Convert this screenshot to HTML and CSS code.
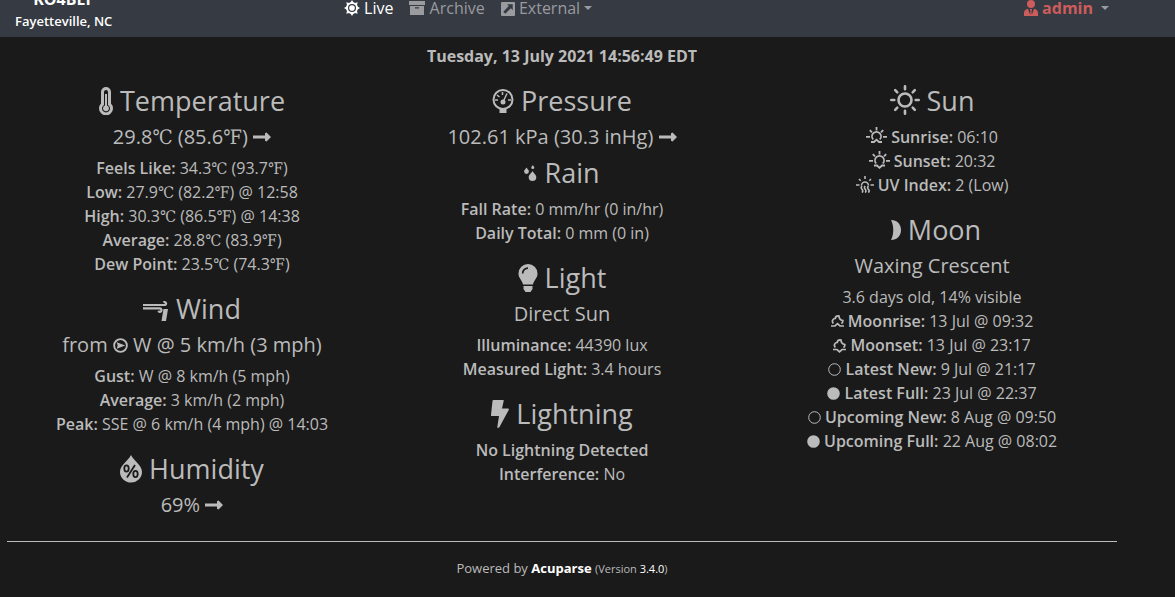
FILE: index.html
```html
<!DOCTYPE html>
<html lang="en">
<head>
    <meta charset="UTF-8">
    <meta name="viewport" content="width=device-width, initial-scale=1.0">
    <title>Fayetteville, NC | Live Weather</title>
    <link rel="stylesheet" href="styles.css">
</head>
<body>

    <!-- Icons used more than once -->
    <svg class="sprite" aria-hidden="true">
        <symbol id="arrow-right" viewBox="0 0 18 10">
            <path d="M0 3.500h12V1.200L13.500.5 18 5l-4.500 4.500L12 8.800V6.500H0z"/>
        </symbol>
        <symbol id="moon-new" viewBox="0 0 13 13">
            <circle cx="6.500" cy="6.500" r="5.800" fill="none" stroke="currentColor"/>
        </symbol>
        <symbol id="moon-full" viewBox="0 0 13 13">
            <circle cx="6.500" cy="6.500" r="6.300"/>
        </symbol>
    </svg>

    <nav class="navbar">
        <a class="brand" href="#">
            <span class="brand-name">KO4BEF</span>
            <span class="brand-location">Fayetteville, NC</span>
        </a>
        <div class="nav-links">
            <a class="nav-link active" href="#">
                <svg class="icon" width="16" height="16" viewBox="0 0 16 16"><circle cx="8" cy="8" r="5" fill="none" stroke="currentColor" stroke-width="2"/><circle cx="8" cy="8" r="2.800"/><path d="M8 0l1.800 3H6.200zM8 16l1.800-3H6.200zM0 8l3-1.800v3.600zM16 8l-3-1.800v3.600zM2.300 2.300l3.500.900-2.600 2.600zM13.700 2.300l-.900 3.500-2.600-2.600zM2.300 13.700l.9-3.500 2.600 2.600zM13.700 13.700l-3.500-.9 2.600-2.600z"/></svg>
                Live</a>
            <a class="nav-link" href="#">
                <svg class="icon" width="16" height="16" viewBox="0 0 16 16"><path d="M0 1h16v4H0z"/><path fill-rule="evenodd" d="M1 6h14v9H1zM6 7.200v1.300h4V7.200z"/></svg>
                Archive</a>
            <a class="nav-link" href="#">
                <svg class="icon" width="14" height="14" viewBox="0 0 14 14"><path fill-rule="evenodd" d="M1 0h12a1 1 0 0 1 1 1v12a1 1 0 0 1-1 1H1a1 1 0 0 1-1-1V1a1 1 0 0 1 1-1zM6 2.300L7.800 4 2.300 9.700l2 2L9.900 6.200 11.700 8V2.300z"/></svg>
                External<span class="caret"></span></a>
        </div>
        <a class="nav-link nav-user" href="#">
            <svg class="icon" width="14" height="16" viewBox="0 0 14 16"><circle cx="7" cy="4" r="4"/><path d="M4 9l2.200 6L6.500 11 5.800 9h2.400l-.7 2 .3 4L10 9c2.500.1 4 1.900 4 4v3H0v-3c0-2.100 1.500-3.900 4-4z"/></svg>
            admin<span class="caret"></span></a>
    </nav>

    <div class="page">
        <p class="timestamp">Tuesday, 13 July 2021 14:56:49 EDT</p>

        <main class="dashboard">
            <div class="column">
                <section class="block">
                    <h2><svg class="icon icon-low" width="14" height="28" viewBox="0 0 14 28"><path fill-rule="evenodd" d="M7 0a5 5 0 0 1 5 5v11.500a7 7 0 1 1-10 0V5a5 5 0 0 1 5-5zM7 3a2 2 0 0 0-2 2v13a4 4 0 1 0 4 0V5a2 2 0 0 0-2-2z"/><path d="M6 7h2v11.500a3 3 0 1 1-2 0z"/></svg> Temperature</h2>
                    <h3>29.8℃ (85.6℉) <svg class="icon-arrow" width="18" height="10"><use href="#arrow-right"/></svg></h3>
                    <ul class="readings">
                        <li><strong>Feels Like:</strong> 34.3℃ (93.7℉)</li>
                        <li><strong>Low:</strong> 27.9℃ (82.2℉) @ 12:58</li>
                        <li><strong>High:</strong> 30.3℃ (86.5℉) @ 14:38</li>
                        <li><strong>Average:</strong> 28.8℃ (83.9℉)</li>
                        <li><strong>Dew Point:</strong> 23.5℃ (74.3℉)</li>
                    </ul>
                </section>

                <section class="block">
                    <h2><svg class="icon" width="26" height="20" viewBox="0 0 26 20"><path fill="none" stroke="currentColor" stroke-width="2.200" d="M0 4h22a1.500 1.500 0 1 0-1.500-2.500M0 7.400h17a1.700 1.700 0 1 1-1.700 2.500"/><path d="M20.500 8h4.500L23 20h-4.500z"/></svg> Wind</h2>
                    <h3>from <svg class="icon icon-compass" width="15" height="15" viewBox="0 0 16 16"><circle cx="8" cy="8" r="6.800" fill="none" stroke="currentColor" stroke-width="2"/><path d="M4 4.500L13 8l-9 3.500L5 8z"/></svg> W @ 5 km/h (3 mph)</h3>
                    <ul class="readings">
                        <li><strong>Gust:</strong> W @ 8 km/h (5 mph)</li>
                        <li><strong>Average:</strong> 3 km/h (2 mph)</li>
                        <li><strong>Peak:</strong> SSE @ 6 km/h (4 mph) @ 14:03</li>
                    </ul>
                </section>

                <section class="block">
                    <h2><svg class="icon icon-low" width="22" height="28" viewBox="0 0 22 28"><path d="M11 0c3 6 11 10 11 17a11 10.500 0 0 1-22 0C0 10 8 6 11 0z"/><g fill="none" stroke="#1a1a1a" stroke-width="1.800"><ellipse cx="6.500" cy="13.500" rx="2.200" ry="3.200"/><ellipse cx="15.500" cy="19" rx="2.200" ry="3.200"/><path d="M15 10L7 22.500"/></g></svg> Humidity</h2>
                    <h3>69% <svg class="icon-arrow" width="18" height="10"><use href="#arrow-right"/></svg></h3>
                </section>
            </div>

            <div class="column">
                <section class="block">
                    <h2><svg class="icon" width="22" height="24" viewBox="0 0 22 24"><circle cx="11" cy="10.500" r="9.500" fill="none" stroke="currentColor" stroke-width="2"/><path d="M7.500 19h7v5h-7z"/><circle cx="11" cy="13" r="2.500"/><path fill="none" stroke="currentColor" stroke-width="1.500" d="M11 13l4-8.500M3 11h3M16 11h3M5 6l2.500 2M10.500 3v3"/></svg> Pressure</h2>
                    <h3>102.61 kPa (30.3 inHg) <svg class="icon-arrow" width="18" height="10"><use href="#arrow-right"/></svg></h3>
                </section>

                <section class="block">
                    <h2><svg class="icon icon-high" width="13" height="16" viewBox="0 0 13 16"><path d="M8.500 6c1 2.200 3.800 3.500 3.800 6.200a3.800 3.800 0 0 1-7.600 0C4.700 9.500 7.500 8.200 8.500 6zM2.500 2.600c.7 1.500 2.400 2.300 2.400 4a2.400 2.400 0 0 1-4.800 0c0-1.700 1.700-2.500 2.400-4zM8.800 0c.4 1 1.500 1.500 1.500 2.500a1.500 1.500 0 0 1-3 0C7.300 1.500 8.400 1 8.800 0z"/></svg> Rain</h2>
                    <ul class="readings">
                        <li><strong>Fall Rate:</strong> 0 mm/hr (0 in/hr)</li>
                        <li><strong>Daily Total:</strong> 0 mm (0 in)</li>
                    </ul>
                </section>

                <section class="block">
                    <h2><svg class="icon icon-low" width="20" height="28" viewBox="0 0 20 28"><path fill-rule="evenodd" d="M10 0a9.500 9.500 0 0 1 9.500 9.500c0 5-3.500 6-4.500 11H5C4 15.500.5 14.500.5 9.500A9.500 9.500 0 0 1 10 0zM10 3.200a6.200 6.200 0 0 0-6.200 6.300h1.700A4.500 4.500 0 0 1 10 4.900z"/><path d="M5.500 22h9v3l-2 3h-5l-2-3z"/></svg> Light</h2>
                    <h3>Direct Sun</h3>
                    <ul class="readings">
                        <li><strong>Illuminance:</strong> 44390 lux</li>
                        <li><strong>Measured Light:</strong> 3.4 hours</li>
                    </ul>
                </section>

                <section class="block">
                    <h2><svg class="icon icon-low" width="18" height="28" viewBox="0 0 18 28"><path d="M2.500 0h9.500q1 0 .7 1L11 8.500h6q1.500 0 .8 1.300L8.500 27q-2 2-2.200 0L8 16H1q-1.200 0-1-1.200L1.500 1q.1-1 1-1z"/></svg> Lightning</h2>
                    <ul class="readings">
                        <li><strong>No Lightning Detected</strong></li>
                        <li><strong>Interference:</strong> No</li>
                    </ul>
                </section>
            </div>

            <div class="column">
                <section class="block">
                    <h2><svg class="icon icon-low" width="30" height="30" viewBox="0 0 30 30"><g fill="none" stroke="currentColor" stroke-width="2.600"><circle cx="15" cy="15" r="6.500"/><path stroke-linecap="round" d="M15 1.300v3M15 25.700v3M1.300 15h3M25.700 15h3M5.200 5.200l2.100 2.100M22.700 22.700l2.100 2.100M5.200 24.800l2.100-2.100M22.700 7.300l2.100-2.100"/></g></svg> Sun</h2>
                    <ul class="readings">
                        <li><svg class="icon icon-rise" width="21" height="16" viewBox="0 0 21 16"><path fill="none" stroke="currentColor" stroke-width="1.800" d="M0 9.800h4M17 9.800h4M10.500 0v3.500M3.800 3.200l2.200 2.200M17.200 3.200l-2.200 2.200M7.200 12.500a4.500 4.500 0 1 1 6.600 0M5 15h3l2.500-2.300L13 15h3"/></svg> <strong>Sunrise:</strong> 06:10</li>
                        <li><svg class="icon" width="21" height="18" viewBox="0 0 21 18"><path fill="none" stroke="currentColor" stroke-width="1.800" d="M0 9.800h4M17 9.800h4M10.500 0v3.500M3.800 3.200l2.200 2.200M17.200 3.200l-2.200 2.200M7.200 12.500a4.500 4.500 0 1 1 6.600 0M5 14.500h3l2.500 2.300 2.500-2.300h3"/></svg> <strong>Sunset:</strong> 20:32</li>
                        <li><svg class="icon" width="18" height="17" viewBox="0 0 18 17"><path fill="none" stroke="currentColor" stroke-width="1.600" d="M0 9h3.500M14.500 9H18M9 0v3M3 3l1.700 1.700M15 3l-1.700 1.700M5.500 9.500a3.500 3.500 0 1 1 7 0M6 10q-1.500 1.700 0 3.300t0 3.300M9.200 10q-1.500 1.700 0 3.300t0 3.300M12.400 10q-1.500 1.700 0 3.300t0 3.300"/></svg> <strong>UV Index:</strong> 2 (Low)</li>
                    </ul>
                </section>

                <section class="block">
                    <h2><svg class="icon icon-rise" width="18" height="20" viewBox="0 0 18 20"><path d="M8 0c6 0 10 4 10 10s-4 10-10 10c3-6 3-14 0-20z"/></svg> Moon</h2>
                    <h3>Waxing Crescent</h3>
                    <ul class="readings">
                        <li>3.6 days old, 14% visible</li>
                        <li><svg class="icon icon-rise" width="13" height="12" viewBox="0 0 13 12"><path fill="none" stroke="currentColor" stroke-width="1.700" d="M2.300 8.500C.3 6 2 3.500 4.200 3.500 4.500 1.500 6.500.8 8 1c0 2.500 1.500 4 3.800 4.500.2 1.300-.3 2.400-1.300 3.200M0 11h4l2.500-2.300L9 11h4"/></svg> <strong>Moonrise:</strong> 13 Jul @ 09:32</li>
                        <li><svg class="icon" width="13" height="14" viewBox="0 0 13 14"><path fill="none" stroke="currentColor" stroke-width="1.700" d="M2.300 8.500C.3 6 2 3.500 4.200 3.500 4.500 1.500 6.500.8 8 1c0 2.500 1.500 4 3.800 4.500.2 1.300-.3 2.400-1.300 3.200M0 10.500h4l2.500 2.300L9 10.500h4"/></svg> <strong>Moonset:</strong> 13 Jul @ 23:17</li>
                        <li><svg class="icon icon-phase" width="13" height="13"><use href="#moon-new"/></svg> <strong>Latest New:</strong> 9 Jul @ 21:17</li>
                        <li><svg class="icon icon-phase" width="13" height="13"><use href="#moon-full"/></svg> <strong>Latest Full:</strong> 23 Jul @ 22:37</li>
                        <li><svg class="icon icon-phase" width="13" height="13"><use href="#moon-new"/></svg> <strong>Upcoming New:</strong> 8 Aug @ 09:50</li>
                        <li><svg class="icon icon-phase" width="13" height="13"><use href="#moon-full"/></svg> <strong>Upcoming Full:</strong> 22 Aug @ 08:02</li>
                    </ul>
                </section>
            </div>
        </main>

        <footer class="footer">
            Powered by <a class="footer-brand" href="#">Acuparse</a>
            <small>(Version <a href="#">3.4.0</a>)</small>
        </footer>
    </div>

</body>
</html>
```
FILE: styles.css
```css
* {
    margin: 0;
    padding: 0;
    box-sizing: border-box;
}

body {
    font-family: 'Open Sans', 'DejaVu Serif Condensed', 'DejaVu Serif', sans-serif;
    font-size: 16px;
    line-height: 24px;
    color: #bbb;
    background-color: #1a1a1a;
}

a {
    color: #fff;
    text-decoration: none;
}

svg {
    fill: currentColor;
}

.sprite {
    display: none;
}

/* Navbar */
.navbar {
    display: grid;
    grid-template-columns: 7fr auto 11fr;
    grid-template-rows: 100%;
    align-items: end;
    height: 37px;
    padding: 0 66px 6px 15px;
    background-color: #363a42;
    overflow: hidden;
}

.brand {
    justify-self: start;
    font-size: 13px;
    line-height: 20px;
    font-weight: 600;
    text-align: center;
}

.brand span {
    display: block;
}

.brand-name {
    font-size: 16px;
    line-height: 24px;
    font-weight: 700;
}

.nav-links {
    display: flex;
    gap: 16px;
    padding-bottom: 11px;
}

.nav-link {
    color: #999b9f;
    white-space: nowrap;
}

.nav-link.active {
    color: #fff;
}

.nav-user {
    justify-self: end;
    padding-bottom: 11px;
    color: #cd5c5c;
    font-weight: 700;
}

.caret {
    display: inline-block;
    margin-left: 4px;
    vertical-align: 4px;
    border: 4px solid transparent;
    border-top-color: #999b9f;
    border-bottom: 0;
}

.nav-user .caret {
    margin-left: 8px;
}

/* Icons */
.icon {
    vertical-align: -2px;
}

.icon-low {
    vertical-align: -4px;
}

.icon-high,
.icon-arrow {
    vertical-align: 2px;
}

.icon-rise {
    vertical-align: 0;
}

.icon-compass,
.icon-phase {
    vertical-align: -1px;
}

/* Dashboard */
.page {
    padding: 7px 58px 0 7px;
}

.timestamp {
    margin-bottom: 16px;
    font-weight: 700;
    text-align: center;
}

.dashboard {
    display: grid;
    grid-template-columns: repeat(3, 1fr);
    padding-bottom: 17px;
    border-bottom: 1px solid #bbb;
    text-align: center;
}

h2 {
    margin-bottom: 8px;
    font-size: 27px;
    line-height: 33px;
    font-weight: 400;
}

h3 {
    margin-bottom: 7px;
    font-size: 20px;
    line-height: 24px;
    font-weight: 400;
}

.readings {
    padding-bottom: 16px;
    list-style: none;
}

strong {
    font-weight: 600;
}

/* Footer */
.footer {
    padding: 16px 0;
    font-size: 13px;
    line-height: 20px;
    text-align: center;
}

.footer-brand {
    font-weight: 700;
}

.footer small {
    font-size: 11px;
}
```
